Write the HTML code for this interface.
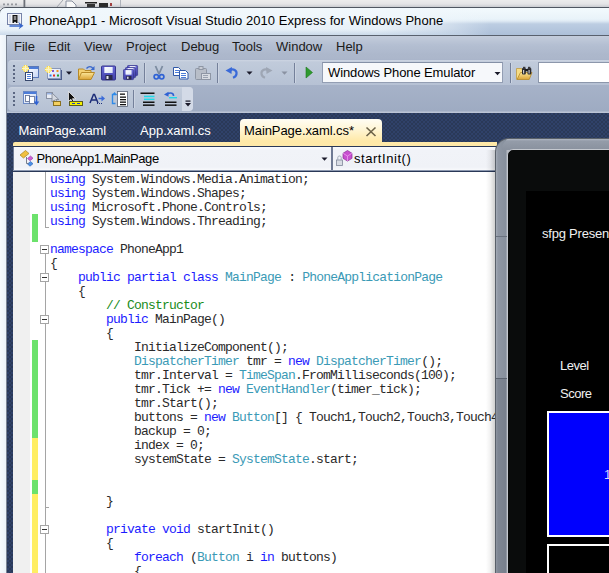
<!DOCTYPE html>
<html><head><meta charset="utf-8">
<style>
html,body{margin:0;padding:0;}
body{width:609px;height:573px;overflow:hidden;position:relative;background:#e3e5e9;font-family:"Liberation Sans",sans-serif;}
.abs{position:absolute;}
#desk{left:0;top:0;width:609px;height:8px;background:linear-gradient(#ececec,#e4e4e6 4px,#c9cbd0 7px);}
#win{left:-1px;top:7px;width:640px;height:600px;border-radius:7px 0 0 0;background:linear-gradient(#f3fafd,#e9f3f9 11px,#dfeaf4 13px,#bccde2 16px,#adc0d9 27px);border:1px solid #4f5661;box-sizing:border-box;}
#glow{left:0;top:8px;width:500px;height:27px;background:linear-gradient(90deg,rgba(240,247,252,.9),rgba(240,247,252,.88) 380px,rgba(240,247,252,.5) 440px,rgba(240,247,252,0) 490px);border-radius:6px 0 0 0;}
#glow2{left:0;top:29px;width:460px;height:6px;background:linear-gradient(rgba(190,208,228,0),rgba(190,208,228,.7));}
#lstrip{left:0;top:35px;width:6px;height:540px;background:linear-gradient(90deg,#f7fafd,#ebf2f9);}
#title{left:29px;top:12px;font-size:13px;line-height:18px;color:#000;white-space:nowrap;letter-spacing:0.05px;}
#client{left:6px;top:35px;width:620px;height:560px;background-color:#2a3958;background-image:radial-gradient(circle at 1px 1px,#30426a 0.7px,rgba(0,0,0,0) 1px),radial-gradient(circle at 3px 3px,#30426a 0.7px,rgba(0,0,0,0) 1px);background-size:4px 4px;border-left:1px solid #7b8494;border-top:1px solid #59616e;box-sizing:border-box;}
#menubar{left:7px;top:36px;width:610px;height:24px;background:linear-gradient(#c4cddc,#b4bfd2 9px,#adb8cc 18px,#abb6ca);}
.mi{position:absolute;top:38px;font-size:13px;line-height:18px;color:#1b1b1b;white-space:nowrap;}
#tbarea{left:7px;top:59px;width:610px;height:54px;background:linear-gradient(#aab5ca,#a6b2c8 27px,#9eabc2 52px,#bcc5d6 53px);}
.tb{position:absolute;border-radius:4px;background:linear-gradient(#cdd5e2,#c1cbdb 2px,#bcc7d8 50%,#b6c1d4);box-sizing:border-box;}
#tabwell{left:7px;top:113px;width:610px;height:34px;background-color:#2a3958;background-image:radial-gradient(circle at 1px 1px,#30426a 0.7px,rgba(0,0,0,0) 1px),radial-gradient(circle at 3px 3px,#30426a 0.7px,rgba(0,0,0,0) 1px);background-size:4px 4px;}
.tab{position:absolute;font-size:13px;line-height:18px;color:#fff;white-space:nowrap;top:122px;}
#atab{left:240px;top:119px;width:142px;height:25px;background:linear-gradient(#fffdf4,#fff6d6 10px,#ffe9a8 22px);border-radius:4px 4px 0 0;}
#ybar{left:13px;top:142px;width:484px;height:4px;background:#ffe9a8;border-radius:2px 0 0 0;}
#nav{left:13px;top:146px;width:484px;height:26px;background:linear-gradient(#2a3958,#2a3958 1px,#6f7a93 1px,#6f7a93 24px,#8c98b0 24px,#8c98b0 25px,#2a3958 25px);}
.combo{position:absolute;top:147px;height:23px;background:linear-gradient(#fafbfd,#f1f3f8 3px,#f0f2f7 20px,#f8f9fc);box-sizing:border-box;font-size:13px;line-height:23px;white-space:nowrap;color:#000;}
#code{left:13px;top:172px;width:484px;height:410px;background:#fff;overflow:hidden;}
#gutter{left:0;top:0;width:17px;height:410px;background:#f0f0f0;}
pre{margin:0;position:absolute;left:37px;top:1px;font-family:"Liberation Mono",monospace;font-size:13px;line-height:14px;letter-spacing:-0.8px;color:#2a2a2a;}
.k{color:#1c1cff}.t{color:#3a9ab6}.c{color:#1a8c1a}
.chg{position:absolute;left:19.4px;width:5.2px;}
.g{background:#6ce26c}.y{background:#ffee62}
.ob{position:absolute;left:27px;width:9px;height:9px;box-sizing:border-box;border:1px solid #a5a5a5;background:#fff;}
.ob:after{content:"";position:absolute;left:1px;top:3px;width:5px;height:1px;background:#333;}
.ol{position:absolute;background:#a5a5a5;}
.pt{position:absolute;color:#f0f0f0;font-size:13px;line-height:16px;white-space:nowrap;letter-spacing:-0.5px;}
</style></head><body>
<div id="desk" class="abs"></div>
<div id="win" class="abs"></div><div id="glow" class="abs"></div><div id="glow2" class="abs"></div><div id="lstrip" class="abs"></div>
<div id="title" class="abs">PhoneApp1 - Microsoft Visual Studio 2010 Express for Windows Phone</div>
<div id="client" class="abs"></div>
<div id="menubar" class="abs"></div>
<span class="mi" style="left:14px">File</span>
<span class="mi" style="left:48px">Edit</span>
<span class="mi" style="left:84px">View</span>
<span class="mi" style="left:126px">Project</span>
<span class="mi" style="left:181px">Debug</span>
<span class="mi" style="left:232px">Tools</span>
<span class="mi" style="left:276px">Window</span>
<span class="mi" style="left:336px">Help</span>
<div id="tbarea" class="abs"></div>
<div class="tb" style="left:8px;top:60px;width:620px;height:25px"></div>
<div class="tb" style="left:8px;top:87px;width:185px;height:24px"></div>
<div class="abs" style="left:182px;top:87px;width:11px;height:24px;background:#d3dae7;border-radius:0 4px 4px 0"></div>
<div class="abs" style="left:322px;top:62px;width:181px;height:21px;background:#f6f8fb;border:1px solid #939eb3;border-top-color:#8490a6;box-sizing:border-box;font-size:13px;line-height:19px;padding-left:5px;white-space:nowrap;letter-spacing:-0.11px">Windows Phone Emulator</div>
<div class="abs" style="left:538px;top:62px;width:90px;height:21px;background:#fff;border:1px solid #8c97ab;box-sizing:border-box;"></div>
<div id="tabwell" class="abs"></div>
<div id="atab" class="abs"></div>
<span class="tab" style="left:18.5px;letter-spacing:-0.16px">MainPage.xaml</span>
<span class="tab" style="left:140px">App.xaml.cs</span>
<span class="tab" style="left:244px;color:#000;letter-spacing:-0.08px">MainPage.xaml.cs*</span>
<div id="ybar" class="abs"></div>
<div id="nav" class="abs"></div>
<div class="combo" style="left:14px;width:317px;padding-left:22.5px;letter-spacing:-0.44px">PhoneApp1.MainPage</div>
<div class="combo" style="left:333px;width:170px;padding-left:21px;letter-spacing:0.55px">startInit()</div>
<div id="code" class="abs">
<div id="gutter" class="abs"></div>
<div class="chg g" style="top:42px;height:28px"></div>
<div class="chg g" style="top:168px;height:98px"></div>
<div class="chg y" style="top:266px;height:42px"></div>
<div class="chg g" style="top:308px;height:14px"></div>
<div class="chg y" style="top:322px;height:100px"></div>
<div class="ol" style="left:32px;top:0;width:1px;height:56px"></div>
<div class="ol" style="left:32px;top:55px;width:4px;height:1px"></div>
<div class="ol" style="left:32px;top:82px;width:1px;height:330px"></div>
<div class="ol" style="left:32px;top:335px;width:4px;height:1px"></div>
<div class="ob" style="top:73px"></div>
<div class="ob" style="top:101px"></div>
<div class="ob" style="top:143px"></div>
<div class="ob" style="top:353px"></div>
<pre><span class="k">using</span> System.Windows.Media.Animation;
<span class="k">using</span> System.Windows.Shapes;
<span class="k">using</span> Microsoft.Phone.Controls;
<span class="k">using</span> System.Windows.Threading;

<span class="k">namespace</span> PhoneApp1
{
    <span class="k">public</span> <span class="k">partial</span> <span class="k">class</span> <span class="t">MainPage</span> : <span class="t">PhoneApplicationPage</span>
    {
        <span class="c">// Constructor</span>
        <span class="k">public</span> MainPage()
        {
            InitializeComponent();
            <span class="t">DispatcherTimer</span> tmr = <span class="k">new</span> <span class="t">DispatcherTimer</span>();
            tmr.Interval = <span class="t">TimeSpan</span>.FromMilliseconds(100);
            tmr.Tick += <span class="k">new</span> <span class="t">EventHandler</span>(timer_tick);
            tmr.Start();
            buttons = <span class="k">new</span> <span class="t">Button</span>[] { Touch1,Touch2,Touch3,Touch4,Touch5 };
            backup = 0;
            index = 0;
            systemState = <span class="t">SystemState</span>.start;


        }

        <span class="k">private</span> <span class="k">void</span> startInit()
        {
            <span class="k">foreach</span> (<span class="t">Button</span> i <span class="k">in</span> buttons)
            {
</pre>
</div>
<!-- phone emulator -->
<div class="abs" style="left:486px;top:150px;width:12px;height:430px;background:linear-gradient(90deg,rgba(0,0,0,0),rgba(0,0,0,.05) 4px,rgba(0,0,0,.2) 9.500px)"></div>
<div class="abs" style="left:495px;top:138px;width:200px;height:500px;background:#596069;border-radius:14px 0 0 0;"></div>
<div class="abs" style="left:496px;top:139px;width:200px;height:500px;background:linear-gradient(90deg,#a4abb7,#8f97a4 2px,#87909d 10px,#b4b9c2 11px,#b4b9c2 12px);border-radius:13px 0 0 0;"></div>
<div class="abs" style="left:502px;top:139px;width:200px;height:11px;background:linear-gradient(#b0b7c2,#949ca9 2px,#8a929f 10px);border-radius:9px 0 0 0;"></div>
<div class="abs" style="left:496px;top:378px;width:12px;height:200px;background:linear-gradient(90deg,#8e95a1,#7e8693 2px,#78808d 10px,#a9aeb7 11px);border-top:1px solid #5c6470"></div>
<div class="abs" style="left:496px;top:236px;width:11px;height:1px;background:#6a727f"></div>
<div class="abs" style="left:507px;top:149px;width:200px;height:500px;background:#0a0c0c;border-radius:6px 0 0 0;border-left:1px solid #c4c8cf;border-top:1px solid #c4c8cf"></div>
<div class="abs" style="left:526px;top:191px;width:100px;height:400px;background:#000;"></div>
<span class="pt" style="left:542px;top:226px;letter-spacing:-0.22px">sfpg Presents</span>
<span class="pt" style="left:560px;top:358px">Level</span>
<span class="pt" style="left:560px;top:386px">Score</span>
<div class="abs" style="left:547px;top:411px;width:100px;height:126px;background:#0000fe;border:2px solid #fff;box-sizing:border-box"></div>
<div class="abs" style="left:547px;top:544px;width:100px;height:60px;background:#000;border:2px solid #fff;box-sizing:border-box"></div>
<span class="pt" style="left:604px;top:467px;color:#d8d8ff">1</span>
<svg class="abs" style="left:0;top:0" width="609" height="573" viewBox="0 0 609 573" id="ov">
<defs>
<linearGradient id="gf" x1="0" y1="0" x2="0" y2="1"><stop offset="0" stop-color="#fbe79a"/><stop offset="1" stop-color="#dba436"/></linearGradient>
<linearGradient id="gw" x1="0" y1="0" x2="1" y2="1"><stop offset="0" stop-color="#ffffff"/><stop offset="1" stop-color="#c4d4f4"/></linearGradient>
<linearGradient id="gp" x1="0" y1="0" x2="0" y2="1"><stop offset="0" stop-color="#6a6ad8"/><stop offset="1" stop-color="#4040a8"/></linearGradient>
<g id="grip" fill="#5b6782"><rect x="0" y="0" width="2" height="2"/><rect x="0" y="4" width="2" height="2"/><rect x="0" y="8" width="2" height="2"/><rect x="0" y="12" width="2" height="2"/></g>
<path id="dd" d="M0 0h6l-3 3.2z"/>
<g id="star"><rect x="2" y="0" width="3" height="7" fill="#f6d44a"/><rect x="0" y="2" width="7" height="3" fill="#f6d44a"/><rect x="1" y="1" width="5" height="5" fill="#fbe98a"/><rect x="3" y="0" width="1" height="7" fill="#fff6c0"/><rect x="0" y="3" width="7" height="1" fill="#fff6c0"/></g>
<g id="floppy"><rect x="0" y="0" width="14" height="14" rx="1" fill="url(#gp)" stroke="#34348c" stroke-width="1"/><rect x="3" y="1" width="8" height="6" fill="#fff"/><rect x="3" y="1" width="8" height="6" fill="url(#gw)" opacity=".6"/><rect x="4" y="9" width="7" height="5" fill="#2a2a4a"/><rect x="5" y="10" width="2" height="3" fill="#e8e8f0"/></g>
</defs>
<!-- app icon -->
<rect x="7.5" y="13.5" width="14" height="11" fill="#f4f6fa" stroke="#7683a8"/>
<rect x="9" y="15" width="2" height="8" fill="#d4dae8"/><rect x="18" y="15" width="2" height="8" fill="#d4dae8"/>
<path d="M12.5 15h5v8h-1.2l-1.3-1.5-1.3 1.500h-1.200z" fill="#111"/><rect x="13.700" y="16" width="2.600" height="4" fill="#888"/>
<path d="M9.500 25.300h10.300l-1.600-3.300 5.300 3.800-4.800 3.500 1.100-2.500h-10.300z" fill="#3a68cc"/>
<!-- top strip bits -->
<g fill="#96989e"><rect x="3" y="3.500" width="2" height="1.800"/><rect x="7" y="3.500" width="2" height="1.800"/><rect x="11" y="3.500" width="2" height="1.800"/><rect x="15" y="3.500" width="2" height="1.800"/></g>
<rect x="23.500" y="0" width="1.800" height="7" fill="#6c7078"/>
<path d="M57 7l6-7" stroke="#a0a4ac" stroke-width="1" fill="none"/>
<path d="M66 7V1h6l4 4v2" fill="#f8f8f8" stroke="#8890a0" stroke-width="1"/>
<rect x="85" y="2" width="12" height="1.500" fill="#222"/><rect x="87" y="4" width="8" height="3" fill="#333"/><rect x="99" y="3" width="9" height="4" fill="#2a2a2a"/><rect x="110" y="3" width="2" height="3" fill="#a04040"/>
<rect x="120" y="0" width="1" height="7" fill="#b0b4bc"/>
<!-- toolbar 1 -->
<use href="#grip" x="13" y="65"/><rect x="13" y="81" width="2" height="1" fill="#5b6782"/>
<!-- new project -->
<rect x="28.500" y="66.500" width="10" height="11" fill="url(#gw)" stroke="#5a78b8"/><rect x="29" y="67" width="9" height="2" fill="#4c7cd8"/>
<rect x="25.500" y="72.500" width="7" height="8" fill="#fff" stroke="#38486c"/><rect x="27" y="74" width="4" height="1" fill="#4c7cd8"/><rect x="27" y="76" width="4" height="1" fill="#4c7cd8"/><rect x="27" y="78" width="4" height="1" fill="#4c7cd8"/>
<use href="#star" x="22" y="65"/>
<!-- add item -->
<rect x="47.500" y="68.500" width="13" height="10" fill="url(#gw)" stroke="#8a98b8"/><rect x="48" y="79" width="13" height="1" fill="#4a5a88"/><rect x="61" y="70" width="1" height="10" fill="#4a5a88"/>
<rect x="52" y="70" width="2" height="2" fill="#8058d0"/><rect x="56.500" y="70" width="2" height="2" fill="#f09020"/><rect x="49.500" y="74.500" width="2" height="2" fill="#2878e8"/><rect x="53" y="74.500" width="2" height="2" fill="#e83020"/><rect x="57" y="74.500" width="2" height="2" fill="#20a030"/>
<use href="#star" x="45" y="66"/>
<use href="#dd" x="66" y="71.500" fill="#1a1a2a"/>
<!-- open folder -->
<path d="M78.500 79.500v-10.500h5l1.500 1.500h6v2.500" fill="#f3d072" stroke="#b88a28"/>
<path d="M78.500 79.500l3-7h13l-3.500 7z" fill="url(#gf)" stroke="#b88a28"/>
<path d="M86.500 68.500c2-2.500 5-2.500 6.500 0" fill="none" stroke="#3a68cc" stroke-width="1.300"/><path d="M94.500 66v4h-4z" fill="#3a68cc"/>
<!-- save -->
<use href="#floppy" x="101.500" y="66"/>
<!-- save all -->
<g transform="translate(127.500,65.500) scale(.72)"><use href="#floppy"/></g>
<g transform="translate(125.500,67.500) scale(.72)"><use href="#floppy"/></g>
<g transform="translate(123.500,69.500) scale(.72)"><use href="#floppy"/></g>
<rect x="144" y="63" width="1" height="20" fill="#74809a"/><rect x="145" y="63" width="1" height="20" fill="#ccd4e2"/>
<!-- cut -->
<path d="M155.500 66l3.500 8M162.500 66l-3.500 8" stroke="#7c8ca0" stroke-width="1.800" fill="none"/>
<circle cx="156.300" cy="76.800" r="2.200" fill="none" stroke="#2f62d4" stroke-width="1.700"/><circle cx="161.700" cy="76.800" r="2.200" fill="none" stroke="#2f62d4" stroke-width="1.700"/>
<!-- copy -->
<path d="M173.500 67.500h5l2 2v6h-7z" fill="#fff" stroke="#3058a8"/><rect x="175" y="70" width="4" height="1" fill="#4c7cd8"/><rect x="175" y="72" width="4" height="1" fill="#4c7cd8"/>
<path d="M179.500 70.500h6l2.500 2.500v6h-8.500z" fill="#fff" stroke="#3058a8"/><rect x="181" y="73" width="5" height="1" fill="#4c7cd8"/><rect x="181" y="75" width="5" height="1" fill="#4c7cd8"/><rect x="181" y="77" width="5" height="1" fill="#4c7cd8"/>
<!-- paste disabled -->
<rect x="195.500" y="68.500" width="11" height="11" rx="1" fill="#b8bec8" stroke="#8e96a4"/><rect x="199" y="66.500" width="4" height="3" fill="#c8ccd4" stroke="#8e96a4"/>
<rect x="201.500" y="73.500" width="9" height="6" fill="#d8dce2" stroke="#8e96a4"/><rect x="203" y="75" width="5" height="1" fill="#9aa2b0"/><rect x="203" y="77" width="5" height="1" fill="#9aa2b0"/>
<rect x="217" y="63" width="1" height="20" fill="#74809a"/><rect x="218" y="63" width="1" height="20" fill="#ccd4e2"/>
<!-- undo -->
<path d="M229.500 70.500c4-2.500 7.500 0 7 3.500-.3 2-1.500 3-3.500 3.800" fill="none" stroke="#3a6ad8" stroke-width="2.200"/><path d="M225.500 70.500l6.500-3.500-.5 7z" fill="#3a6ad8"/>
<use href="#dd" x="246.500" y="71.500" fill="#1a1a2a"/>
<!-- redo -->
<path d="M268.500 70.500c-4-2.500-7.500 0-7 3.500.3 2 1.500 3 3.500 3.800" fill="none" stroke="#9ea6b4" stroke-width="2.200"/><path d="M272.500 70.500l-6.500-3.500.5 7z" fill="#9ea6b4"/>
<use href="#dd" x="281.500" y="71.500" fill="#8a92a2"/>
<rect x="294" y="63" width="1" height="20" fill="#74809a"/><rect x="295" y="63" width="1" height="20" fill="#ccd4e2"/>
<path d="M306 67l6.500 5.500-6.500 5.500z" fill="#2f9a2f" stroke="#1f7a1f" stroke-width=".6"/>
<use href="#dd" x="494.500" y="72" fill="#1a1a2a"/>
<rect x="510" y="63" width="1" height="20" fill="#74809a"/><rect x="511" y="63" width="1" height="20" fill="#ccd4e2"/>
<!-- find in files -->
<path d="M516.500 79.500v-11h5l1 1.500h3v2.500" fill="#f6dc86" stroke="#c09a40" stroke-width=".8"/>
<path d="M517 79.500l3.500-7h11.500l-2.800 7z" fill="url(#gf)" stroke="#b88a28" stroke-width=".8"/>
<rect x="522" y="68" width="3.800" height="6.500" rx="1" fill="#2a2a2e"/><rect x="527.500" y="68" width="3.800" height="6.500" rx="1" fill="#2a2a2e"/><rect x="523" y="66.800" width="2.400" height="2" fill="#3a3a3e"/><rect x="528" y="66.800" width="2.400" height="2" fill="#3a3a3e"/><rect x="525" y="69" width="3" height="2.200" fill="#1a1a1e"/><rect x="523" y="70" width="1.200" height="3.500" fill="#c8c8cc"/><rect x="528.500" y="70" width="1.200" height="3.500" fill="#c8c8cc"/>
<!-- toolbar 2 -->
<use href="#grip" x="13" y="92"/>
<rect x="23.500" y="91.500" width="13" height="12" fill="url(#gw)" stroke="#6a88c4"/><rect x="24" y="92" width="12" height="2" fill="#4c7cd8"/>
<rect x="25.500" y="95.500" width="4" height="6" fill="#fff" stroke="#5a6a90" stroke-width=".8"/><rect x="29.500" y="96.500" width="5" height="7" fill="#fff" stroke="#5a6a90" stroke-width=".8"/>
<path d="M36.500 96v6" stroke="#2f62d4" stroke-width="1.600"/><path d="M33.800 101.500h5.400l-2.700 4z" fill="#2f62d4"/>
<!-- icon2 -->
<rect x="46.500" y="92.500" width="6" height="6" fill="#e8ecf4" stroke="#8a92a4"/><rect x="47" y="93" width="5" height="1.500" fill="#9ab4e4"/>
<path d="M52 93v9l2.300-2 1.700 3.500 1.500-.7-1.700-3.300h3z" fill="#d4d8e0" stroke="#7a8290" stroke-width=".8"/>
<rect x="53.500" y="101.500" width="7" height="4" fill="#f4d060" stroke="#8a7020"/>
<!-- icon3 -->
<path d="M68.500 91.500v10l2.400-2.200 1.800 3.700 1.600-.8-1.800-3.500h3.200z" fill="#111" stroke="#fff" stroke-width=".7"/>
<rect x="69.500" y="101.500" width="13" height="4" fill="#f4f000" stroke="#5a5a20"/><rect x="72" y="103" width="3" height="1" fill="#2040c0"/><rect x="77" y="103" width="3" height="1" fill="#2040c0"/>
<!-- A-> -->
<path d="M90 103l3.500-8.500h1l3.500 8.500M91.500 100h5" fill="none" stroke="#1c2c78" stroke-width="1.500"/>
<path d="M98.500 98.500h4" stroke="#3a6ad8" stroke-width="1.500"/><path d="M101.500 95.500l3.500 3-3.500 3z" fill="#3a6ad8"/><rect x="97" y="103" width="1" height="1" fill="#1c2c78"/><rect x="99" y="103" width="1" height="1" fill="#1c2c78"/><rect x="101" y="103" width="1" height="1" fill="#1c2c78"/>
<!-- icon5 -->
<path d="M116.500 94.500h-4v9h3" fill="none" stroke="#2f8ae8" stroke-width="1.400"/><path d="M114.500 92l2.500 3h-5z" fill="#2f8ae8"/>
<rect x="117.500" y="91.500" width="10" height="15" fill="#fff" stroke="#5a6478" stroke-width=".8"/>
<g fill="#111"><rect x="120" y="93.500" width="5" height="1.300"/><rect x="120" y="96.500" width="6" height="1.300"/><rect x="120" y="99" width="6" height="1.300"/><rect x="120" y="101.500" width="6" height="1.300"/><rect x="120" y="104" width="6" height="1.300"/></g>
<rect x="133" y="90" width="1" height="18" fill="#74809a"/><rect x="134" y="90" width="1" height="18" fill="#ccd4e2"/>
<!-- icon6 -->
<rect x="140.500" y="92.500" width="14" height="1.500" fill="#111"/><rect x="144" y="95.700" width="10.500" height="1.500" fill="#20d8e8"/><rect x="144" y="98.600" width="10.500" height="1.500" fill="#20d8e8"/><rect x="143" y="101.500" width="11.500" height="1.500" fill="#111"/><rect x="143" y="104.400" width="11.500" height="1.500" fill="#111"/>
<!-- icon7 -->
<path d="M167.500 94c3-2 6.300-.8 6 2" fill="none" stroke="#2f62d4" stroke-width="1.600"/><path d="M164 94.500l4.500-2.800v5z" fill="#2f62d4"/>
<rect x="169" y="97" width="8" height="1.400" fill="#20d8e8"/><rect x="165" y="101.500" width="11.500" height="1.500" fill="#111"/><rect x="165" y="104.400" width="11.500" height="1.500" fill="#111"/>
<!-- overflow -->
<rect x="185.500" y="100.500" width="5" height="1.200" fill="#1a1a2a"/><path d="M185 103h6l-3 3.500z" fill="#1a1a2a"/>
<!-- tab close -->
<path d="M366.500 127.500l9 8.500M375.500 127.500l-9 8.500" stroke="#6c6248" stroke-width="1.600" fill="none"/>
<!-- nav arrows/icons -->
<use href="#dd" x="321.500" y="157.500" fill="#1a1a2a" transform="translate(0,0)"/>
<g><path d="M20 155l5.500-4.500 3.500 3-5.500 4.500z" fill="#f0c040" stroke="#a88420" stroke-width=".7"/><path d="M27.500 158.500l3-2.500 2.500 2.200-3 2.500z" fill="#d060d8" stroke="#9038a0" stroke-width=".6"/><path d="M27.500 164l3-2.500 2.500 2.200-3 2.500z" fill="#4a90e8" stroke="#2860b0" stroke-width=".6"/><path d="M26.500 157v6.500h2" fill="none" stroke="#6a7080" stroke-width=".9"/></g>
<g><path d="M343 153.300l4.500-2.800 4.500 2.800v5l-4.500 2.800-4.500-2.800z" fill="#c850d0" stroke="#8a2c94" stroke-width=".7"/><path d="M343 153.300l4.500 2.700 4.500-2.700M347.500 156v5" fill="none" stroke="#f0a8f4" stroke-width=".7"/><rect x="336.500" y="160" width="6" height="5.500" fill="#d8dce4" stroke="#80889a" stroke-width=".8"/><path d="M337.800 160v-2.500c0-2 3.400-2 3.400 0v2.500" fill="none" stroke="#a0a8b6" stroke-width="1"/></g>
</svg>
</body></html>
